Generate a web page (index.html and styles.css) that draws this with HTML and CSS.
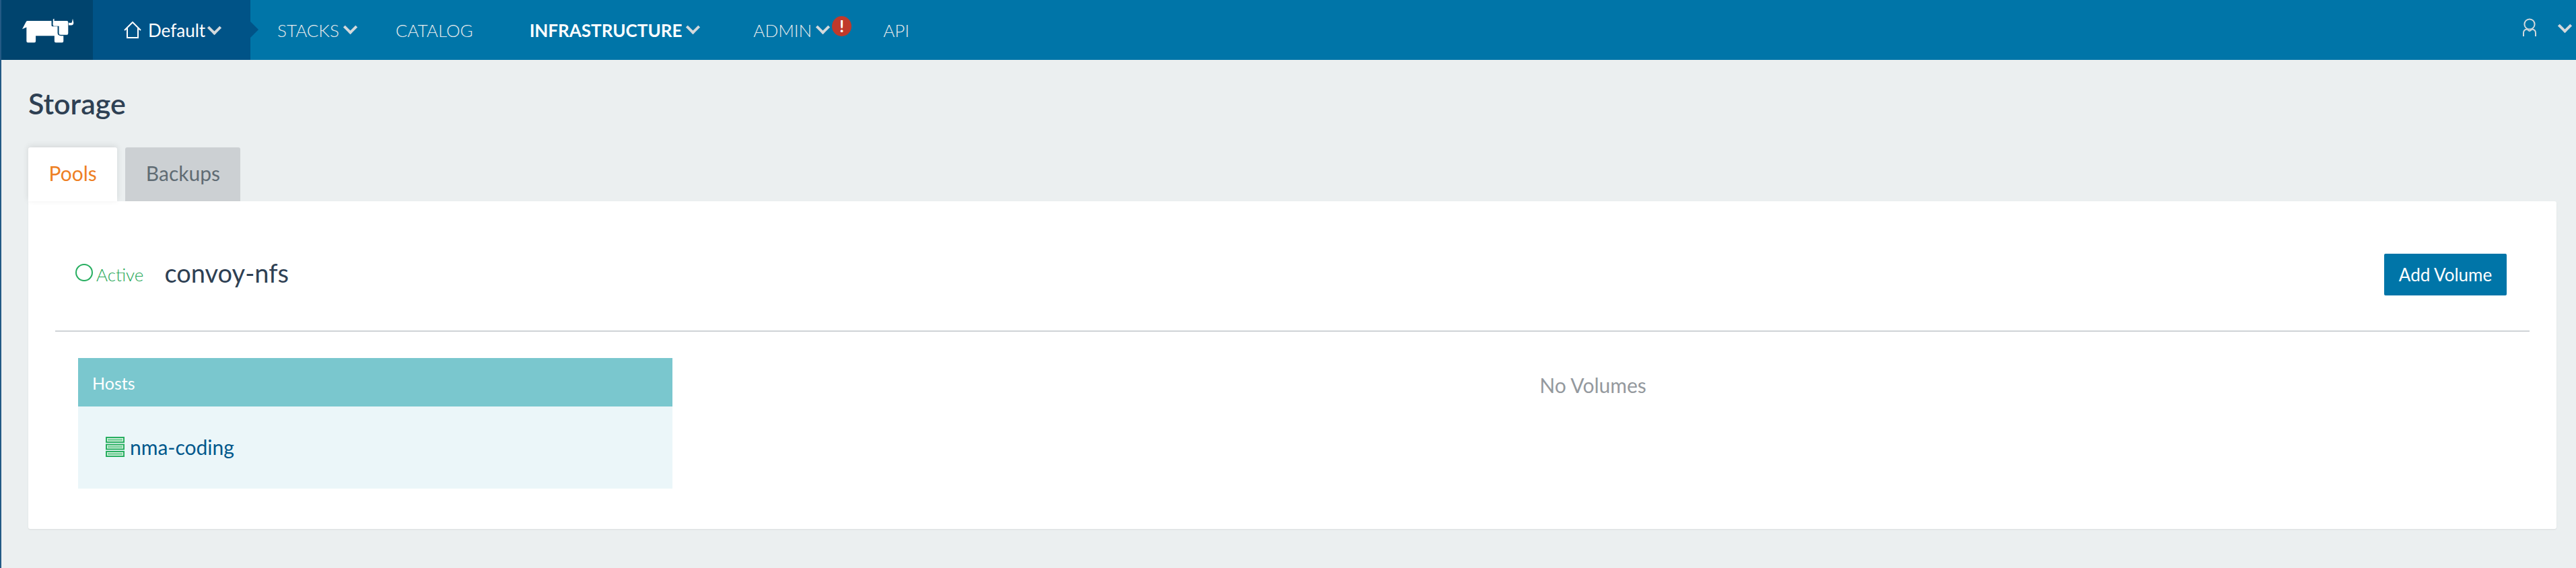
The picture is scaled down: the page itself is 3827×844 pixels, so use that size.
FILE: index.html
```html
<!DOCTYPE html>
<html lang="en">
<head>
    <meta charset="UTF-8">
    <meta name="viewport" content="width=device-width, initial-scale=1.0">
    <title>Storage</title>
    <link rel="stylesheet" href="styles.css">
</head>
<body>
    <header class="topbar">
        <a href="#" class="logo">
            <svg class="logo-mark" viewBox="98 80 230 110" aria-hidden="true">
                <path d="M98 128 L115 96 Q117 92 122 92 H228 V112 Q228 116 232 116 H255 V145 Q255 158 270 158 H281 V182 Q281 188 275 188 H247 Q241 188 241 182 V158 H158 V182 Q158 188 152 188 H123 Q117 188 117 182 V120 Z"/>
                <path d="M235 84 L240 82 V92 H296 Q302 92 302 98 V147 Q302 154 296 154 H268 Q261 154 261 147 V115 H240 Q234 115 234 108 Z"/>
                <path d="M304 100 V111 H316 Q326 111 326 100 L322 82 L319 97 Q318 101 314 101 Z"/>
            </svg>
        </a>
        <a href="#" class="env">
            <svg class="home-icon" viewBox="0 0 26 25" aria-hidden="true">
                <path d="M1 13 L13 1 L25 13 M5 10 V24 H21 V10"/>
            </svg>
            <span>Default</span>
            <i class="caret caret-env"></i>
        </a>
        <nav class="main-nav">
            <a href="#" class="nav-item nav-stacks">STACKS<i class="caret"></i></a>
            <a href="#" class="nav-item nav-catalog">CATALOG</a>
            <a href="#" class="nav-item nav-infra active">INFRASTRUCTURE<i class="caret"></i></a>
            <a href="#" class="nav-item nav-admin">ADMIN<i class="caret"></i><span class="alert-badge">!</span></a>
            <a href="#" class="nav-item nav-api">API</a>
        </nav>
        <a href="#" class="user-menu">
            <svg class="user-icon" viewBox="0 0 20 27" aria-hidden="true">
                <circle cx="10" cy="9" r="7.6"/>
                <path d="M1 27 V22 Q1 17 6 16.5 M19 27 V22 Q19 17 14 16.5 M6.5 16 Q10 22 13.5 16"/>
            </svg>
            <i class="caret caret-user"></i>
        </a>
    </header>

    <main class="page">
        <h1 class="page-title">Storage</h1>
        <div class="tabs">
            <a href="#" class="tab tab-active">Pools</a>
            <a href="#" class="tab">Backups</a>
        </div>
        <section class="pool-card">
            <div class="pool-head">
                <span class="state"><i class="state-ring"></i>Active</span>
                <h2 class="pool-name">convoy-nfs</h2>
                <button type="button" class="btn-add">Add Volume</button>
            </div>
            <div class="pool-body">
                <div class="hosts">
                    <div class="hosts-title">Hosts</div>
                    <div class="hosts-list">
                        <a href="#" class="host-link">
                            <svg class="server-icon" viewBox="0 0 28 30" aria-hidden="true">
                                <rect class="bar" x="0" y="0" width="28" height="9"/>
                                <rect class="bar" x="0" y="10.500" width="28" height="9"/>
                                <rect class="bar" x="0" y="21" width="28" height="9"/>
                                <rect class="slot" x="2.500" y="2.500" width="23" height="4"/>
                                <rect class="slot" x="2.500" y="13" width="23" height="4"/>
                                <rect class="slot" x="2.500" y="23.500" width="23" height="4"/>
                            </svg>
                            nma-coding
                        </a>
                    </div>
                </div>
                <div class="volumes-empty">No Volumes</div>
            </div>
        </section>
    </main>
</body>
</html>
```

FILE: styles.css
```css
:root {
    --header-blue: #0075a8;
    --logo-blue: #00446e;
    --env-blue: #005387;
    --page-bg: #ebeff0;
    --edge-blue: #235a85;
    --nav-text: #e6eaec;
    --caret: #d3d9dc;
    --ink: #2e4053;
    --green: #27ae60;
    --orange: #ee7f24;
    --red: #c0392b;
    --line: #cfd3d6;
    --link: #00588c;
}

html, body {
    height: 100%;
}

body {
    margin: 0;
    box-sizing: border-box;
    border-left: 2px solid var(--edge-blue);
    background-color: var(--page-bg);
    color: var(--ink);
    font-family: Lato, "Open Sans", sans-serif;
    font-size: 26px;
    overflow: hidden;
}

a {
    text-decoration: none;
    color: inherit;
}

/* top bar */
.topbar {
    display: flex;
    align-items: stretch;
    height: 89px;
    background-color: var(--header-blue);
    color: var(--nav-text);
}

.logo {
    display: flex;
    align-items: flex-start;
    width: 136px;
    background-color: var(--logo-blue);
}

.logo-mark {
    width: 77px;
    height: 37px;
    margin: 27px 0 0 31px;
    fill: #fff;
}

.env {
    position: relative;
    display: flex;
    align-items: center;
    width: 234px;
    box-sizing: border-box;
    padding-left: 46px;
    background-color: var(--env-blue);
    color: #fff;
}

.env::after {
    content: "";
    position: absolute;
    left: 100%;
    top: 32px;
    border-left: 12px solid var(--env-blue);
    border-top: 12.5px solid transparent;
    border-bottom: 12.5px solid transparent;
}

.home-icon {
    width: 26px;
    height: 25px;
    margin-right: 10px;
    fill: none;
    stroke: #fff;
    stroke-width: 2;
}

.caret {
    display: inline-block;
    width: 11px;
    height: 11px;
    margin: -8px 0 0 9px;
    border-right: 4px solid var(--caret);
    border-bottom: 4px solid var(--caret);
    transform: rotate(45deg);
    vertical-align: middle;
}

.caret-env {
    margin-top: -6px;
    margin-left: 6px;
}

.main-nav {
    display: flex;
    align-items: center;
    margin-left: 40px;
    font-weight: 300;
}

.nav-item {
    display: flex;
    align-items: center;
    white-space: nowrap;
}

.nav-catalog { margin-left: 60px; }
.nav-infra { margin-left: 84px; }
.nav-admin { margin-left: 82px; }
.nav-api { margin-left: 47px; }

.nav-item.active {
    color: #fff;
    font-weight: 700;
}

.alert-badge {
    display: flex;
    align-items: center;
    justify-content: center;
    width: 29px;
    height: 30px;
    margin: -12px 0 0 6px;
    border-radius: 50%;
    background-color: var(--red);
    color: #fff;
    font-size: 24px;
    font-weight: 700;
}

.user-menu {
    display: flex;
    align-items: flex-start;
    margin-left: auto;
    padding: 27px 7px 0 0;
}

.user-icon {
    width: 20px;
    height: 27px;
    fill: none;
    stroke: var(--caret);
    stroke-width: 2;
}

.caret-user {
    margin: 4px 2px 0 35px;
}

/* page */
.page {
    padding: 41px 29px 0 40px;
}

.page-title {
    margin: 0;
    height: 89px;
    font-size: 43px;
    line-height: 48px;
    font-weight: 600;
}

.tabs {
    display: flex;
    gap: 12px;
}

.tab {
    display: flex;
    align-items: center;
    justify-content: center;
    height: 76px;
    padding: 0 30.500px 4px;
    border-radius: 3px 3px 0 0;
    background-color: #ccd0d3;
    color: #606c74;
    font-size: 30px;
}

.tab-active {
    position: relative;
    background-color: #fff;
    color: var(--orange);
    box-shadow: 0 -2px 10px rgba(0, 0, 0, 0.1);
}

.pool-card {
    height: 487px;
    padding: 0 40px;
    border-radius: 0 3px 3px 3px;
    background-color: #fff;
    box-shadow: 0 1px 2px rgba(0, 0, 0, 0.08);
}

.pool-head {
    display: flex;
    align-items: center;
    height: 194px;
    box-sizing: border-box;
    padding: 26px 34px 0 30px;
    border-bottom: 2px solid var(--line);
}

.state {
    display: flex;
    align-items: center;
    color: #1ea653;
    font-size: 26px;
    font-weight: 300;
}

.state-ring {
    width: 22px;
    height: 22px;
    margin: 0 5px 6px 0;
    border: 2px solid var(--green);
    border-radius: 50%;
}

.pool-name {
    margin: 0 0 6px 31px;
    font-size: 38px;
    font-weight: 400;
}

.btn-add {
    margin-left: auto;
    width: 182px;
    height: 62px;
    border: 0;
    border-radius: 2px;
    background-color: var(--header-blue);
    color: #fff;
    font-family: inherit;
    font-size: 26px;
}

.pool-body {
    display: flex;
    padding: 39px 0 0 34px;
}

.hosts {
    width: 883px;
}

.hosts-title {
    height: 72px;
    padding-left: 21px;
    background-color: #7ac7ce;
    color: #fff;
    font-size: 25px;
    line-height: 74px;
}

.hosts-list {
    height: 122px;
    padding: 42px 0 0 41px;
    box-sizing: border-box;
    background-color: #ebf6f9;
}

.host-link {
    display: flex;
    align-items: center;
    color: var(--link);
    font-size: 30px;
}

.server-icon {
    width: 28px;
    height: 30px;
    margin-right: 8px;
}

.server-icon .bar {
    fill: var(--green);
}

.server-icon .slot {
    fill: #7fd3a0;
    stroke: #e8f7ee;
    stroke-width: 1;
}

.volumes-empty {
    flex: 1;
    padding: 22px 24px 0 0;
    color: #94999e;
    font-size: 30px;
    text-align: center;
}
```
